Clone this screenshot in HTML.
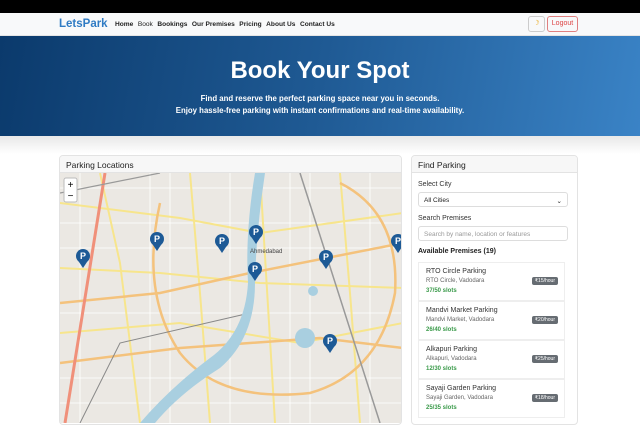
<!DOCTYPE html><html><head><style>
*{margin:0;padding:0;box-sizing:border-box}
body{width:640px;height:414px;overflow:hidden;font-family:"Liberation Sans",sans-serif;background:#fff;position:relative}
.top{height:13px;background:#000}
.nav{height:23px;background:#f8f9fa;border-bottom:1px solid #e5e5e5;position:relative}
.logo{position:absolute;left:59px;top:5px;font-size:11.5px;font-weight:bold;color:#2f7bc4}
.links{position:absolute;left:115px;top:8px;font-size:6.6px;font-weight:bold;color:#222}
.links span{margin-right:4.5px}
.btn{position:absolute;top:3px;height:16px;border-radius:3px;font-size:7px;text-align:center;line-height:14px}
.hero{height:100px;background:linear-gradient(100deg,#0b3a6c 0%,#1f5a94 50%,#3a83c6 100%);color:#fff;text-align:center}
.hero h1{padding-top:20px;font-size:24px;font-weight:bold;line-height:30px}
.hero p{font-size:7.8px;font-weight:bold;line-height:12px}
.shadow{height:18px;background:linear-gradient(#e8e8e8,#fff)}
.card{position:absolute;border:1px solid #e3e3e3;border-radius:4px;background:#fff;overflow:hidden}
.ch{height:17px;background:#f7f7f7;border-bottom:1px solid #e3e3e3;font-size:8.5px;padding:4px 6px;color:#222}
.lbl{position:absolute;left:6px;font-size:7px;color:#333}
.inp{position:absolute;left:6px;width:150px;height:15px;border:1px solid #ddd;border-radius:3px;font-size:6.5px;padding:4px 5px}
.item{position:absolute;left:6px;width:147px;height:39px;border:1px solid #eee;padding:4px 7px;font-size:6.5px;color:#333}
.item b{font-weight:normal;font-size:7px;display:block;margin-top:1px}
.item i{font-style:normal;color:#666;display:block;margin-top:3px;font-size:6px}
.item em{font-style:normal;color:#3a9a4a;font-weight:bold;display:block;margin-top:4px;font-size:6px}
.badge{position:absolute;right:6px;top:14px;background:#666c72;color:#fff;font-size:5px;padding:1px 3px;border-radius:2px}
</style></head><body>
<div class="top"></div>
<div class="nav"><div class="logo">LetsPark</div>
<div class="links"><span>Home</span><span style="font-weight:normal">Book</span><span>Bookings</span><span>Our Premises</span><span>Pricing</span><span>About Us</span><span>Contact Us</span></div>
<div class="btn" style="left:528px;width:17px;border:1px solid #ccc;color:#e8a000">&#9789;</div>
<div class="btn" style="left:547px;width:31px;border:1px solid #e08080;color:#d44">Logout</div></div>
<div class="hero"><h1>Book Your Spot</h1><p style="margin-top:7px">Find and reserve the perfect parking space near you in seconds.</p><p>Enjoy hassle-free parking with instant confirmations and real-time availability.</p></div>
<div class="shadow"></div>
<div class="card" style="left:59px;top:155px;width:343px;height:270px"><div class="ch">Parking Locations</div>
<svg width="343" height="250" style="display:block" viewBox="0 0 343 250">
<rect width="343" height="250" fill="#ebe8e3"/>
<g fill="none" stroke="#fff" stroke-width="0.8">
<path d="M0 15 H343 M0 50 H343 M0 75 H343 M0 140 H343 M0 205 H343 M0 230 H343"/>
<path d="M20 0 V250 M90 0 V250 M110 0 V250 M170 0 V250 M230 0 V250 M250 0 V250 M310 0 V250"/></g>
<g fill="none" stroke="#f7e58c" stroke-width="2">
<path d="M0 30 L120 45 L200 60 L343 40"/><path d="M0 95 L100 100 L200 110 L343 115"/><path d="M40 0 L60 90 L80 250"/><path d="M130 0 L140 120 L150 250"/><path d="M0 160 L120 150 L240 170 L343 150"/><path d="M280 0 L290 120 L300 250"/><path d="M200 0 L215 250"/></g>
<g fill="none" stroke="#f4c27c" stroke-width="2.5">
<path d="M0 130 L100 120 L190 100 L343 70"/><path d="M100 30 Q80 120 120 180 Q160 230 250 220 Q320 200 335 120 Q340 40 280 10"/><path d="M0 190 L120 175 L260 165 L343 175"/></g>
<path d="M45 0 L5 250" stroke="#f0907a" stroke-width="3"/>
<path d="M0 20 L100 0" stroke="#999" stroke-width="1.2"/><path d="M240 0 L320 250" stroke="#999" stroke-width="1.5"/><path d="M20 250 L60 170 L190 140" stroke="#888" stroke-width="1" fill="none"/>
<path d="M195 0 Q185 60 188 110 Q185 160 150 185 Q110 215 80 250 L95 250 Q120 220 160 195 Q195 165 195 110 Q196 60 205 0Z" fill="#a9cfe0"/>
<circle cx="245" cy="165" r="10" fill="#a9cfe0"/><circle cx="253" cy="118" r="5" fill="#a9cfe0"/>
<rect x="4" y="5" width="13" height="24" rx="2" fill="#fff" stroke="#bbb"/>
<text x="10.5" y="15" font-size="10" text-anchor="middle" font-family="Liberation Sans">+</text><text x="10.5" y="26" font-size="10" text-anchor="middle" font-family="Liberation Sans">−</text>
<g fill="#1d5a96">
<g transform="translate(23,83)"><circle r="7"/><path d="M-6 3 L0 12 L6 3Z"/><text y="3" font-size="9" font-weight="bold" fill="#fff" text-anchor="middle" font-family="Liberation Sans">P</text></g>
<g transform="translate(97,66)"><circle r="7"/><path d="M-6 3 L0 12 L6 3Z"/><text y="3" font-size="9" font-weight="bold" fill="#fff" text-anchor="middle" font-family="Liberation Sans">P</text></g>
<g transform="translate(162,68)"><circle r="7"/><path d="M-6 3 L0 12 L6 3Z"/><text y="3" font-size="9" font-weight="bold" fill="#fff" text-anchor="middle" font-family="Liberation Sans">P</text></g>
<g transform="translate(196,59)"><circle r="7"/><path d="M-6 3 L0 12 L6 3Z"/><text y="3" font-size="9" font-weight="bold" fill="#fff" text-anchor="middle" font-family="Liberation Sans">P</text></g>
<g transform="translate(195,96)"><circle r="7"/><path d="M-6 3 L0 12 L6 3Z"/><text y="3" font-size="9" font-weight="bold" fill="#fff" text-anchor="middle" font-family="Liberation Sans">P</text></g>
<g transform="translate(266,84)"><circle r="7"/><path d="M-6 3 L0 12 L6 3Z"/><text y="3" font-size="9" font-weight="bold" fill="#fff" text-anchor="middle" font-family="Liberation Sans">P</text></g>
<g transform="translate(338,68)"><circle r="7"/><path d="M-6 3 L0 12 L6 3Z"/><text y="3" font-size="9" font-weight="bold" fill="#fff" text-anchor="middle" font-family="Liberation Sans">P</text></g>
<g transform="translate(270,168)"><circle r="7"/><path d="M-6 3 L0 12 L6 3Z"/><text y="3" font-size="9" font-weight="bold" fill="#fff" text-anchor="middle" font-family="Liberation Sans">P</text></g>
</g>
<text x="190" y="80" font-size="6" fill="#444" font-family="Liberation Sans">Ahmedabad</text>
</svg></div>
<div class="card" style="left:411px;top:155px;width:167px;height:270px"><div class="ch">Find Parking</div>
<div class="lbl" style="top:25px">Select City</div>
<div class="inp" style="top:36px;color:#222">All Cities<span style="float:right">&#8964;</span></div>
<div class="lbl" style="top:59px">Search Premises</div>
<div class="inp" style="top:70px;color:#999">Search by name, location or features</div>
<div class="lbl" style="top:92px;font-weight:bold;color:#222">Available Premises (19)</div>
<div class="item" style="top:106px"><b>RTO Circle Parking</b><i>RTO Circle, Vadodara</i><em>37/50 slots</em><span class="badge">₹15/hour</span></div>
<div class="item" style="top:145px"><b>Mandvi Market Parking</b><i>Mandvi Market, Vadodara</i><em>26/40 slots</em><span class="badge">₹20/hour</span></div>
<div class="item" style="top:184px"><b>Alkapuri Parking</b><i>Alkapuri, Vadodara</i><em>12/30 slots</em><span class="badge">₹25/hour</span></div>
<div class="item" style="top:223px"><b>Sayaji Garden Parking</b><i>Sayaji Garden, Vadodara</i><em>25/35 slots</em><span class="badge">₹18/hour</span></div>
</div>
</body></html>
